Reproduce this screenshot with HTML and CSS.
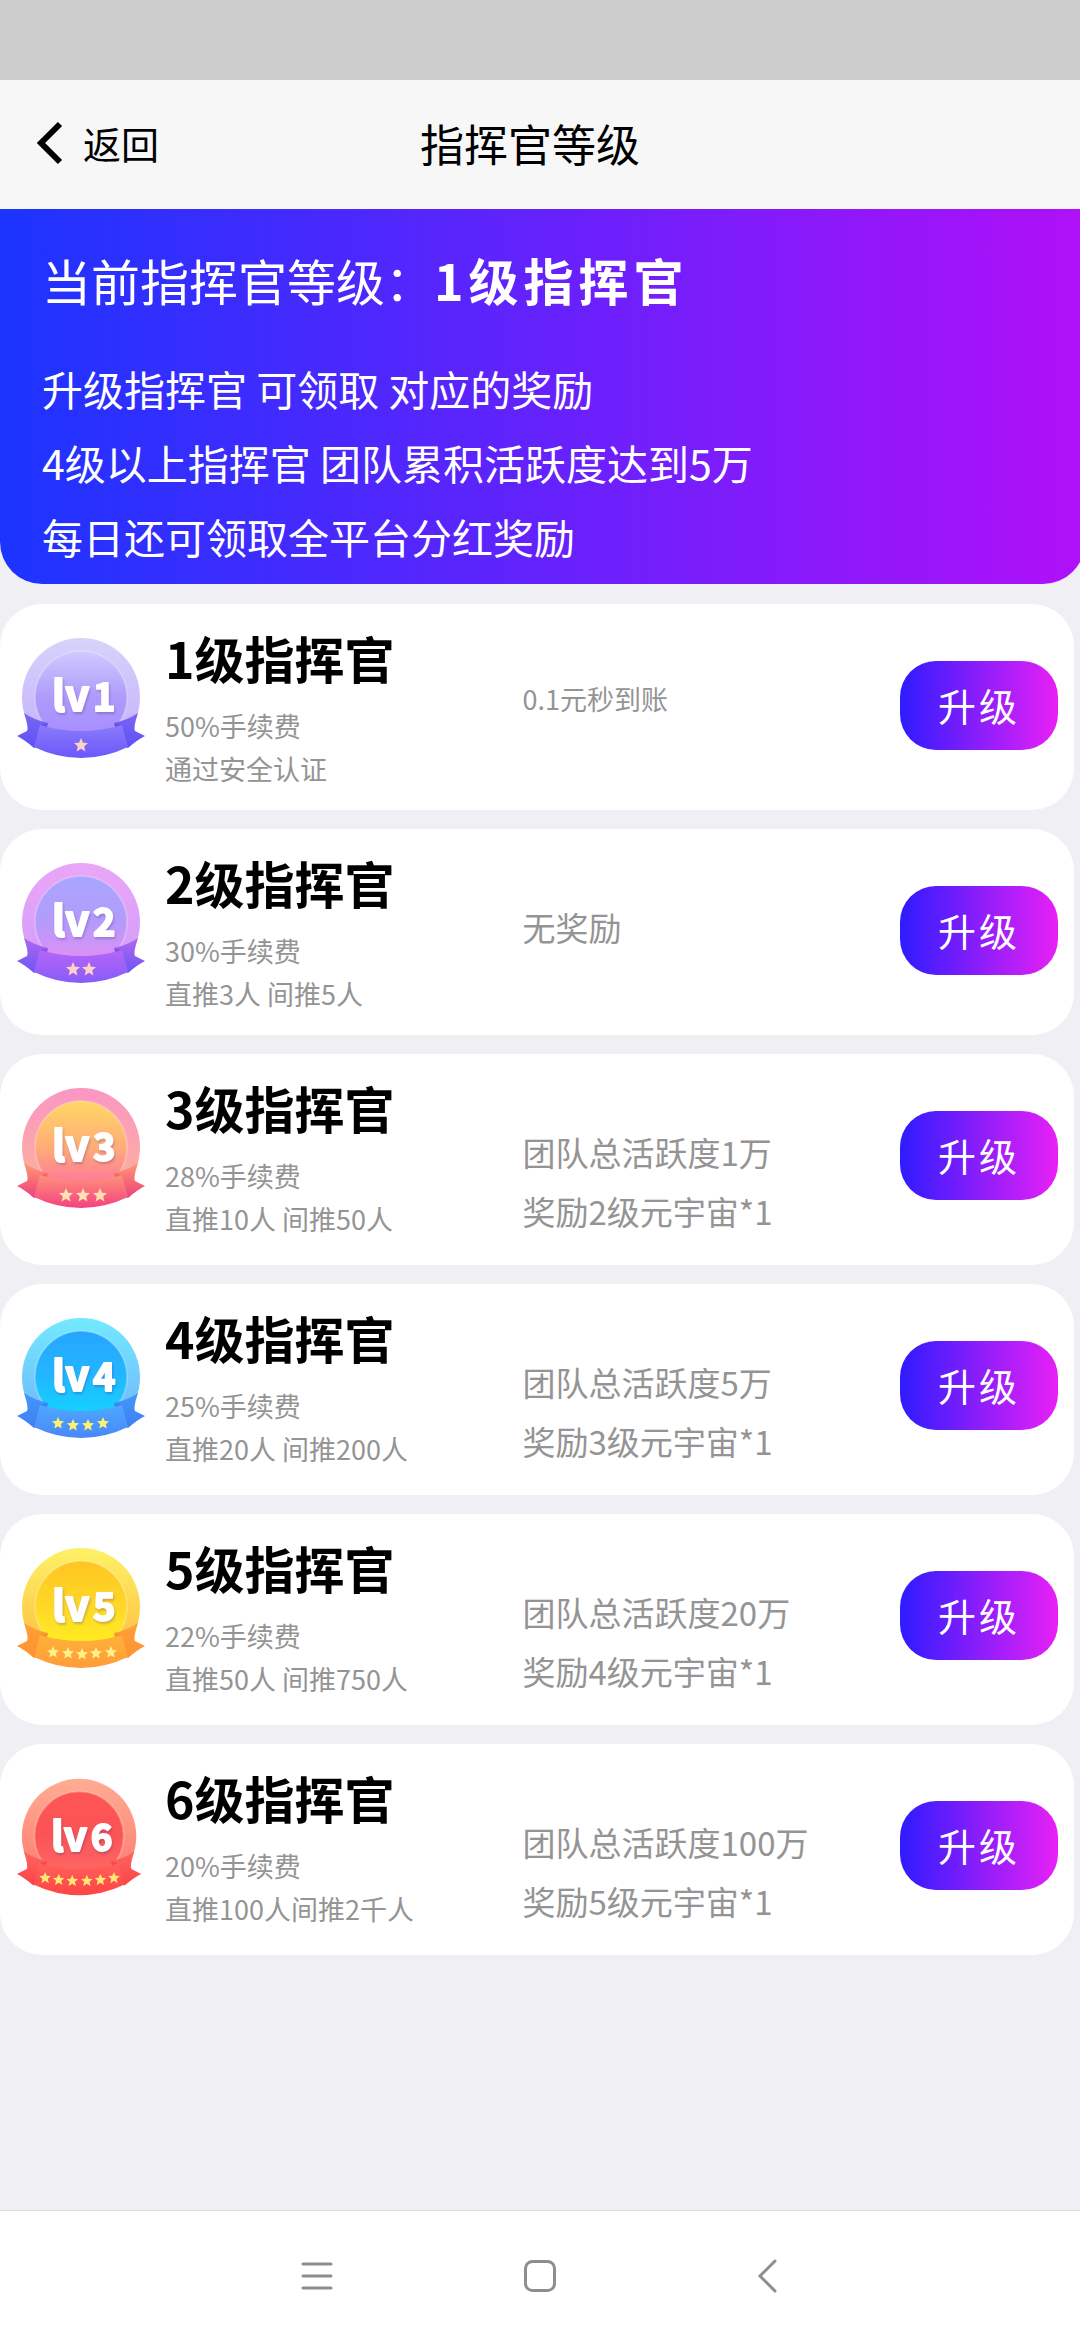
FILE: index.html
```html
<!DOCTYPE html>
<html lang="zh-CN">
<head>
<meta charset="utf-8">
<meta name="viewport" content="width=device-width, initial-scale=1">
<title>指挥官等级</title>
<link rel="stylesheet" href="styles.css">
</head>
<body>
<svg class="defs" width="0" height="0" aria-hidden="true">
  <defs>
    <linearGradient id="rim1" x2="0" y2="1"><stop stop-color="#d6d3fb"/><stop offset="1" stop-color="#c3acfb"/></linearGradient>
    <linearGradient id="face1" x2="0" y2="1"><stop stop-color="#cfcaff"/><stop offset=".5" stop-color="#ae9bfb"/><stop offset="1" stop-color="#a58bff"/></linearGradient>
    <linearGradient id="band1" x2="0" y2="1"><stop stop-color="#8c7bfb"/><stop offset="1" stop-color="#6a58fb"/></linearGradient>
    <linearGradient id="tail1" x2="0" y2="1"><stop stop-color="#7a66f4"/><stop offset="1" stop-color="#5e50f5"/></linearGradient>

    <linearGradient id="rim2" x2="0" y2="1"><stop stop-color="#eaa6f8"/><stop offset="1" stop-color="#cf9cfb"/></linearGradient>
    <linearGradient id="face2" x2="0" y2="1"><stop stop-color="#a9a6ff"/><stop offset=".5" stop-color="#b39bfa"/><stop offset="1" stop-color="#ea8cf4"/></linearGradient>
    <linearGradient id="band2" x2="0" y2="1"><stop stop-color="#b765f8"/><stop offset="1" stop-color="#855df8"/></linearGradient>
    <linearGradient id="tail2" x2="0" y2="1"><stop stop-color="#b068f0"/><stop offset="1" stop-color="#6d55f5"/></linearGradient>

    <linearGradient id="rim3" x2="0" y2="1"><stop stop-color="#fb96c4"/><stop offset="1" stop-color="#fdb595"/></linearGradient>
    <linearGradient id="face3" x2="0" y2="1"><stop stop-color="#ffd765"/><stop offset=".5" stop-color="#ffad77"/><stop offset="1" stop-color="#fb6ba4"/></linearGradient>
    <linearGradient id="band3" x2="0" y2="1"><stop stop-color="#ff927a"/><stop offset="1" stop-color="#f34280"/></linearGradient>
    <linearGradient id="tail3" x2="0" y2="1"><stop stop-color="#ff9a70"/><stop offset="1" stop-color="#ee3f7c"/></linearGradient>

    <linearGradient id="rim4" x2="0" y2="1"><stop stop-color="#72eaff"/><stop offset="1" stop-color="#72aefb"/></linearGradient>
    <linearGradient id="face4" x2="0" y2="1"><stop stop-color="#26a5ff"/><stop offset=".5" stop-color="#22b7ff"/><stop offset="1" stop-color="#12d9ff"/></linearGradient>
    <linearGradient id="band4" x2="0" y2="1"><stop stop-color="#4da9ff"/><stop offset="1" stop-color="#4a86fb"/></linearGradient>
    <linearGradient id="tail4" x2="0" y2="1"><stop stop-color="#4398f8"/><stop offset="1" stop-color="#3f7ef5"/></linearGradient>

    <linearGradient id="rim5" x2="0" y2="1"><stop stop-color="#fdf266"/><stop offset="1" stop-color="#ffb53a"/></linearGradient>
    <linearGradient id="face5" x2="0" y2="1"><stop stop-color="#ffc521"/><stop offset=".5" stop-color="#ffd828"/><stop offset="1" stop-color="#fff21e"/></linearGradient>
    <linearGradient id="band5" x2="0" y2="1"><stop stop-color="#ffb238"/><stop offset="1" stop-color="#ff9c3a"/></linearGradient>
    <linearGradient id="tail5" x2="0" y2="1"><stop stop-color="#ffa035"/><stop offset="1" stop-color="#ff9133"/></linearGradient>

    <linearGradient id="rim6" x2="0" y2="1"><stop stop-color="#ffac94"/><stop offset="1" stop-color="#ff7468"/></linearGradient>
    <linearGradient id="face6" x2="0" y2="1"><stop stop-color="#ff5552"/><stop offset=".5" stop-color="#fb5457"/><stop offset="1" stop-color="#ff6c66"/></linearGradient>
    <linearGradient id="band6" x2="0" y2="1"><stop stop-color="#ff605c"/><stop offset="1" stop-color="#ff4444"/></linearGradient>
    <linearGradient id="tail6" x2="0" y2="1"><stop stop-color="#ff6660"/><stop offset="1" stop-color="#fa4348"/></linearGradient>

    <circle id="rim" cx="64" cy="59" r="59"/>
    <g id="face"><circle cx="64" cy="59" r="46"/><circle cx="64" cy="59" r="46" fill="none" stroke="#fff" stroke-opacity=".22" stroke-width="2"/></g>
    <path id="tails" d="M7 75Q17 82 31 85L26 106L17 110Q8 102 0 98L10 93Q12 90 7 75ZM121 75Q111 82 97 85L102 106L111 110Q120 102 128 98L118 93Q116 90 121 75Z"/>
    <path id="band" d="M23 87Q64 99 105 87L111 109Q88 120 64 120Q40 120 17 109Z"/>
    <path id="folds" d="M23 87L31 85L30 89ZM105 87L97 85L98 89Z" fill-opacity=".16"/>
    <path id="star" d="M0-7L2-2.300L7-2L3.200 1.400L4.400 6.500L0 3.700L-4.400 6.500L-3.200 1.400L-7-2L-2-2.300Z" stroke-linejoin="round"/>
  </defs>
</svg>

<div class="page">
  <div class="status-bar"></div>
  <header class="topbar">
    <a class="back" href="#">
      <svg width="28" height="44" viewBox="0 0 28 44" aria-hidden="true"><path d="M24 3L5 22L24 41" fill="none" stroke="#000" stroke-width="6"/></svg>
      <span>返回</span>
    </a>
    <h1 class="topbar-title">指挥官等级</h1>
  </header>

  <section class="banner">
    <p class="banner-level">当前指挥官等级：<strong>1级指挥官</strong></p>
    <p>升级指挥官 可领取 对应的奖励</p>
    <p>4级以上指挥官 团队累积活跃度达到5万</p>
    <p>每日还可领取全平台分红奖励</p>
  </section>

  <main class="levels">
    <article class="card">
      <svg class="badge" viewBox="0 0 128 120">
        <use href="#rim" fill="url(#rim1)"/><use href="#face" fill="url(#face1)"/><use href="#tails" fill="url(#tail1)"/><use href="#band" fill="url(#band1)"/><use href="#folds" fill="#2a12b8"/>
        <text class="lv" x="35" y="73">lv</text><text class="num" x="76" y="73">1</text>
        <g fill="#fdd0c8"><use href="#star" x="64" y="107"/></g>
      </svg>
      <div class="info"><h2>1级指挥官</h2><p>50%手续费</p><p>通过安全认证</p></div>
      <div class="reward reward-small"><p>0.1元秒到账</p></div>
      <button class="upgrade" type="button">升级</button>
    </article>

    <article class="card">
      <svg class="badge" viewBox="0 0 128 120">
        <use href="#rim" fill="url(#rim2)"/><use href="#face" fill="url(#face2)"/><use href="#tails" fill="url(#tail2)"/><use href="#band" fill="url(#band2)"/><use href="#folds" fill="#2a12b8"/>
        <text class="lv" x="35" y="73">lv</text><text class="num" x="76" y="73">2</text>
        <g fill="#fdd0c8"><use href="#star" x="56" y="106"/><use href="#star" x="72" y="106"/></g>
      </svg>
      <div class="info"><h2>2级指挥官</h2><p>30%手续费</p><p>直推3人 间推5人</p></div>
      <div class="reward"><p>无奖励</p></div>
      <button class="upgrade" type="button">升级</button>
    </article>

    <article class="card">
      <svg class="badge" viewBox="0 0 128 120">
        <use href="#rim" fill="url(#rim3)"/><use href="#face" fill="url(#face3)"/><use href="#tails" fill="url(#tail3)"/><use href="#band" fill="url(#band3)"/><use href="#folds" fill="#b8122a"/>
        <text class="lv" x="35" y="73">lv</text><text class="num" x="76" y="73">3</text>
        <g fill="#ffe0b0"><use href="#star" x="49" y="107"/><use href="#star" x="66" y="107"/><use href="#star" x="83" y="107"/></g>
      </svg>
      <div class="info"><h2>3级指挥官</h2><p>28%手续费</p><p>直推10人 间推50人</p></div>
      <div class="reward"><p>团队总活跃度1万</p><p>奖励2级元宇宙*1</p></div>
      <button class="upgrade" type="button">升级</button>
    </article>

    <article class="card">
      <svg class="badge" viewBox="0 0 128 120">
        <use href="#rim" fill="url(#rim4)"/><use href="#face" fill="url(#face4)"/><use href="#tails" fill="url(#tail4)"/><use href="#band" fill="url(#band4)"/><use href="#folds" fill="#123ab8"/>
        <text class="lv" x="35" y="73">lv</text><text class="num" x="76" y="73">4</text>
        <g fill="#fff36e"><use href="#star" transform="translate(41 105) scale(.86)"/><use href="#star" transform="translate(56 107) scale(.86)"/><use href="#star" transform="translate(71 107) scale(.86)"/><use href="#star" transform="translate(86 105) scale(.86)"/></g>
      </svg>
      <div class="info"><h2>4级指挥官</h2><p>25%手续费</p><p>直推20人 间推200人</p></div>
      <div class="reward"><p>团队总活跃度5万</p><p>奖励3级元宇宙*1</p></div>
      <button class="upgrade" type="button">升级</button>
    </article>

    <article class="card">
      <svg class="badge" viewBox="0 0 128 120">
        <use href="#rim" fill="url(#rim5)"/><use href="#face" fill="url(#face5)"/><use href="#tails" fill="url(#tail5)"/><use href="#band" fill="url(#band5)"/><use href="#folds" fill="#c85a00"/>
        <text class="lv" x="35" y="73">lv</text><text class="num" x="76" y="73">5</text>
        <g fill="#fff08a"><use href="#star" transform="translate(36 104) scale(.86)"/><use href="#star" transform="translate(51 105) scale(.86)"/><use href="#star" transform="translate(65 106) scale(.86)"/><use href="#star" transform="translate(79 105) scale(.86)"/><use href="#star" transform="translate(94 104) scale(.86)"/></g>
      </svg>
      <div class="info"><h2>5级指挥官</h2><p>22%手续费</p><p>直推50人 间推750人</p></div>
      <div class="reward"><p>团队总活跃度20万</p><p>奖励4级元宇宙*1</p></div>
      <button class="upgrade" type="button">升级</button>
    </article>

    <article class="card">
      <svg class="badge" viewBox="0 0 132 122">
        <use href="#rim" fill="url(#rim6)"/><use href="#face" fill="url(#face6)"/><use href="#tails" fill="url(#tail6)"/><use href="#band" fill="url(#band6)"/><use href="#folds" fill="#a80a1a"/>
        <text class="lv" x="35" y="74">lv</text><text class="num" x="76" y="74">6</text>
        <g fill="#ffe774"><use href="#star" transform="translate(29 102) scale(.86)"/><use href="#star" transform="translate(43 104) scale(.86)"/><use href="#star" transform="translate(57 105) scale(.86)"/><use href="#star" transform="translate(72 105) scale(.86)"/><use href="#star" transform="translate(86 104) scale(.86)"/><use href="#star" transform="translate(100 102) scale(.86)"/></g>
      </svg>
      <div class="info"><h2>6级指挥官</h2><p>20%手续费</p><p>直推100人间推2千人</p></div>
      <div class="reward"><p>团队总活跃度100万</p><p>奖励5级元宇宙*1</p></div>
      <button class="upgrade" type="button">升级</button>
    </article>
  </main>

  <nav class="system-nav">
    <button type="button" aria-label="菜单"><svg width="36" height="36" viewBox="0 0 36 36"><path d="M4 6H32M4 18H32M4 30H32"/></svg></button>
    <button type="button" aria-label="主页"><svg width="36" height="36" viewBox="0 0 36 36"><rect x="3.500" y="3.500" width="29" height="29" rx="7"/></svg></button>
    <button type="button" aria-label="后退"><svg width="36" height="36" viewBox="0 0 36 36"><path d="M30 3L15 18L30 33"/></svg></button>
  </nav>
</div>
</body>
</html>
```

FILE: styles.css
```css
* {
  box-sizing: border-box;
}

body {
  margin: 0;
  background: #efeff4;
  color: #000;
  font-family: "Noto Sans CJK SC", sans-serif;
}

h1,
h2,
p {
  margin: 0;
}

button {
  border: 0;
  padding: 0;
  font-family: inherit;
}

.defs {
  position: absolute;
}

.page {
  display: flex;
  flex-direction: column;
  min-height: 100vh;
  overflow-x: hidden;
}

.status-bar {
  height: 80px;
  background: #ccc;
}

/* Title bar */
.topbar {
  display: grid;
  grid-template-columns: 1fr auto 1fr;
  align-items: center;
  height: 129px;
  padding: 0 56px 4px 36px;
  background: #f7f7f7;
}

.back {
  display: flex;
  align-items: center;
  gap: 19px;
  color: #000;
  font-size: 38px;
  line-height: 56px;
  text-decoration: none;
}

.topbar-title {
  font-size: 44px;
  font-weight: 400;
  line-height: 64px;
}

/* Current level banner, runs slightly past the right edge */
.banner {
  margin-right: -5px;
  padding: 33px 42px 11px;
  border-radius: 0 0 42px 42px;
  background: linear-gradient(90deg, #1c34ff, #6422fc 50%, #b010f8);
  color: #fff;
  font-size: 41px;
  line-height: 74px;
}

.banner-level {
  margin-bottom: 34px;
  font-size: 49px;
}

.banner-level strong {
  font-size: 50px;
  letter-spacing: 5px;
}

/* Level cards */
.levels {
  display: flex;
  flex-direction: column;
  gap: 19px;
  padding: 20px 6px 19px 0;
}

.card {
  display: grid;
  grid-template-columns: 128px 1fr 1fr 158px;
  align-items: start;
  padding: 0 16px 0 17px;
  border-radius: 42px;
  background: #fff;
}

.badge {
  width: 128px;
  height: 120px;
  margin-top: 34px;
}

.lv,
.num {
  fill: #fff;
  stroke: #fff;
  stroke-width: 2px;
  stroke-linejoin: round;
  font-family: "Noto Sans CJK SC", sans-serif;
  font-weight: 700;
  filter: drop-shadow(1px 2px 1px rgba(60, 30, 120, 0.25));
}

.lv {
  font-size: 42px;
}

.num {
  font-size: 38px;
}

.info {
  padding: 23px 0 20px 20px;
  color: #949494;
  font-size: 27px;
  line-height: 43px;
  white-space: nowrap;
}

.info h2 {
  margin-bottom: 17px;
  color: #000;
  font-size: 50px;
  font-weight: 700;
  line-height: 60px;
}

.reward {
  padding: 69px 0 24px;
  color: #949494;
  font-size: 33px;
  line-height: 59px;
  white-space: nowrap;
}

.reward-small {
  font-size: 27px;
  line-height: 52px;
}

.upgrade {
  height: 89px;
  margin-top: 57px;
  padding-bottom: 2px;
  border-radius: 36px;
  background: linear-gradient(90deg, #2e1bff, #e820f6);
  color: #fff;
  font-size: 38px;
  letter-spacing: 3px;
}

/* System navigation */
.system-nav {
  display: grid;
  grid-template-columns: repeat(3, 223px);
  justify-content: center;
  height: 130px;
  margin-top: auto;
  border-top: 1px solid #ddd;
  background: #fff;
}

.system-nav button {
  display: flex;
  align-items: center;
  justify-content: center;
  background: none;
}

.system-nav svg {
  fill: none;
  stroke: #8e8e8e;
  stroke-width: 3px;
  stroke-linecap: round;
}
```
